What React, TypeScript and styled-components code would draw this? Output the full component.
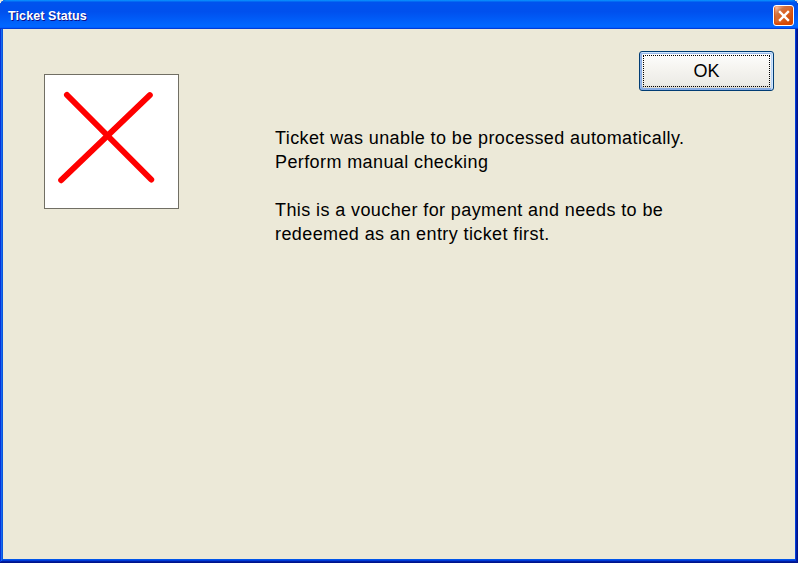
import React from 'react';
import styled, { createGlobalStyle } from 'styled-components';

const GlobalStyle = createGlobalStyle`
  html, body {
    margin: 0;
    padding: 0;
    background: #ece9d8;
  }
  body {
    font-family: "Liberation Sans", Arial, sans-serif;
  }
`;

const Window = styled.div`
  width: 798px;
  height: 563px;
  display: flex;
  flex-direction: column;
  background: #0055ea;
  box-shadow:
    inset -1px -1px #00138c,
    inset 1px 1px #0831d9,
    inset -2px -2px #001ea0,
    inset 2px 2px #166aee,
    inset -3px -3px #003bda,
    inset 3px 3px #0855dd;
  border-radius: 6px 6px 0 0;
  overflow: hidden;
`;

const TitleBar = styled.div`
  height: 29px;
  box-sizing: border-box;
  padding: 3px 4px 0 8px;
  display: flex;
  align-items: center;
  justify-content: space-between;
  background: linear-gradient(
    180deg,
    #0997ff,
    #0053ee 8%,
    #0050ee 40%,
    #06f 88%,
    #06f 93%,
    #005bff 95%,
    #003dd7 96%,
    #003dd7
  );
`;

const Title = styled.span`
  color: #fff;
  font-family: "Liberation Sans", Arial, sans-serif;
  font-weight: bold;
  font-size: 12.5px;
  letter-spacing: 0.1px;
  text-shadow: 1px 1px #0f1089;
`;

const CloseButton = styled.button`
  width: 21px;
  height: 21px;
  margin-top: -1px;
  padding: 0;
  display: flex;
  align-items: center;
  justify-content: center;
  border: 1px solid #fff;
  border-radius: 3px;
  background: radial-gradient(circle at 90% 90%, #cc4600 0%, #dc6527 55%, #cd7546 70%, #ffccb2 90%, #fff 100%);
  box-shadow: inset 0 -1px 2px 1px #da4600;
`;

const Body = styled.div`
  flex: 1;
  margin: 0 3px 4px 3px;
  background: #ece9d8;
  display: flex;
  padding: 22px 21px 0 41px;
`;

const IconBox = styled.div`
  width: 133px;
  height: 133px;
  margin-top: 23px;
  flex-shrink: 0;
  background: #fff;
  border: 1px solid #716f64;
`;

const MainColumn = styled.div`
  flex: 1;
  display: flex;
  flex-direction: column;
  margin-left: 96px;
`;

const OkButton = styled.button`
  position: relative;
  align-self: flex-end;
  width: 135px;
  height: 40px;
  padding: 0;
  border: 1px solid #003c74;
  border-radius: 3px;
  background: linear-gradient(180deg, #fff 0%, #f6f5f1 40%, #ecebe6 86%, #d6d0c5 100%);
  box-shadow: inset -1px 1px #cee7ff, inset 1px 2px #98b8ea, inset -2px 2px #bcd4f6,
    inset 1px -1px #89ade4, inset 2px -2px #89ade4;
  font-family: "Liberation Sans", Arial, sans-serif;
  font-size: 18px;
  color: #000;

  &::after {
    content: '';
    position: absolute;
    inset: 3px;
    border: 1px dotted #000;
  }
`;

const Message = styled.div`
  margin-top: 35px;
  font-size: 18px;
  line-height: 24px;
  letter-spacing: 0.4px;
  color: #000;
`;

const Paragraph = styled.p`
  margin: 0 0 24px 0;
`;

const CrossIcon = () => (
  <svg width="133" height="133" viewBox="0 0 133 133">
    <g stroke="#ff0000" strokeWidth="6" strokeLinecap="round">
      <line x1="22" y1="20" x2="106.2" y2="104.5" />
      <line x1="104.8" y1="20.2" x2="16.2" y2="105.2" />
    </g>
  </svg>
);

const CloseGlyph = () => (
  <svg width="12" height="12" viewBox="0 0 12 12">
    <g stroke="#fff" strokeWidth="2.4" strokeLinecap="square">
      <line x1="2" y1="2" x2="10" y2="10" />
      <line x1="10" y1="2" x2="2" y2="10" />
    </g>
  </svg>
);

export default function App() {
  return (
    <>
      <GlobalStyle />
      <Window>
        <TitleBar>
          <Title>Ticket Status</Title>
          <CloseButton aria-label="Close">
            <CloseGlyph />
          </CloseButton>
        </TitleBar>
        <Body>
          <IconBox>
            <CrossIcon />
          </IconBox>
          <MainColumn>
            <OkButton>OK</OkButton>
            <Message>
              <Paragraph>
                Ticket was unable to be processed automatically.
                <br />
                Perform manual checking
              </Paragraph>
              <Paragraph>
                This is a voucher for payment and needs to be
                <br />
                redeemed as an entry ticket first.
              </Paragraph>
            </Message>
          </MainColumn>
        </Body>
      </Window>
    </>
  );
}
